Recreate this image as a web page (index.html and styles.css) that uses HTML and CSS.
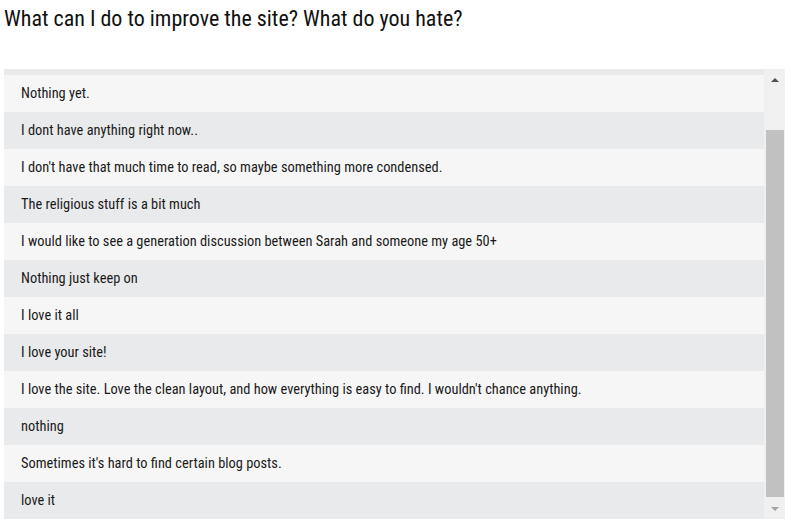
FILE: index.html
```html
<!DOCTYPE html>
<html lang="en">
<head>
    <meta charset="UTF-8">
    <title>Survey answers</title>
    <link rel="stylesheet" href="styles.css">
</head>
<body>
    <h1 class="question">What can I do to improve the site? What do you hate?</h1>

    <div class="answers">
        <ul class="answer-list">
            <li>Nothing yet.</li>
            <li>I dont have anything right now..</li>
            <li>I don't have that much time to read, so maybe something more condensed.</li>
            <li>The religious stuff is a bit much</li>
            <li>I would like to see a generation discussion between Sarah and someone my age 50+</li>
            <li>Nothing just keep on</li>
            <li>I love it all</li>
            <li>I love your site!</li>
            <li>I love the site. Love the clean layout, and how everything is easy to find. I wouldn't chance anything.</li>
            <li>nothing</li>
            <li>Sometimes it's hard to find certain blog posts.</li>
            <li>love it</li>
        </ul>
        <div class="scrollbar">
            <span class="arrow up"></span>
            <div class="track"><div class="thumb"></div></div>
            <span class="arrow down"></span>
        </div>
    </div>
</body>
</html>
```

FILE: styles.css
```css
body {
    margin: 0;
    padding: 0 7px 0 4px;
    background: #fff;
    font-family: 'Roboto', 'Liberation Sans', sans-serif;
    font-stretch: condensed;
    color: #1a1a1a;
}
.question {
    margin: 0;
    padding-top: 5px;
    height: 69px;
    box-sizing: border-box;
    font-size: 22px;
    font-weight: 400;
    line-height: 28px;
    color: #111;
}
.answers {
    display: flex;
    height: 450px;
    background: #e9eaec;
    overflow: hidden;
}
.answer-list {
    flex: 1;
    list-style: none;
    margin: 0;
    padding: 6px 0 0;
}
.answer-list li {
    height: 37px;
    line-height: 37px;
    padding-left: 17px;
    font-size: 14.4px;
    background: #e9eaec;
}
.answer-list li:nth-child(odd) { background: #f6f6f6; }
.scrollbar {
    width: 21px;
    background: #f0f0f0;
    display: flex;
    flex-direction: column;
}
.track {
    flex: 1;
    padding: 44px 1px 5px 2px;
}
.thumb { height: 100%; background: #c1c1c1; }
.arrow {
    height: 17px;
    display: flex;
    align-items: center;
    justify-content: center;
}
.arrow::before {
    content: "";
    border-left: 4px solid transparent;
    border-right: 4px solid transparent;
}
.arrow.up::before { border-bottom: 4px solid #505050; margin-top: 5px; }
.arrow.down::before { border-top: 4px solid #a3a3a3; margin-bottom: 4px; }
```
